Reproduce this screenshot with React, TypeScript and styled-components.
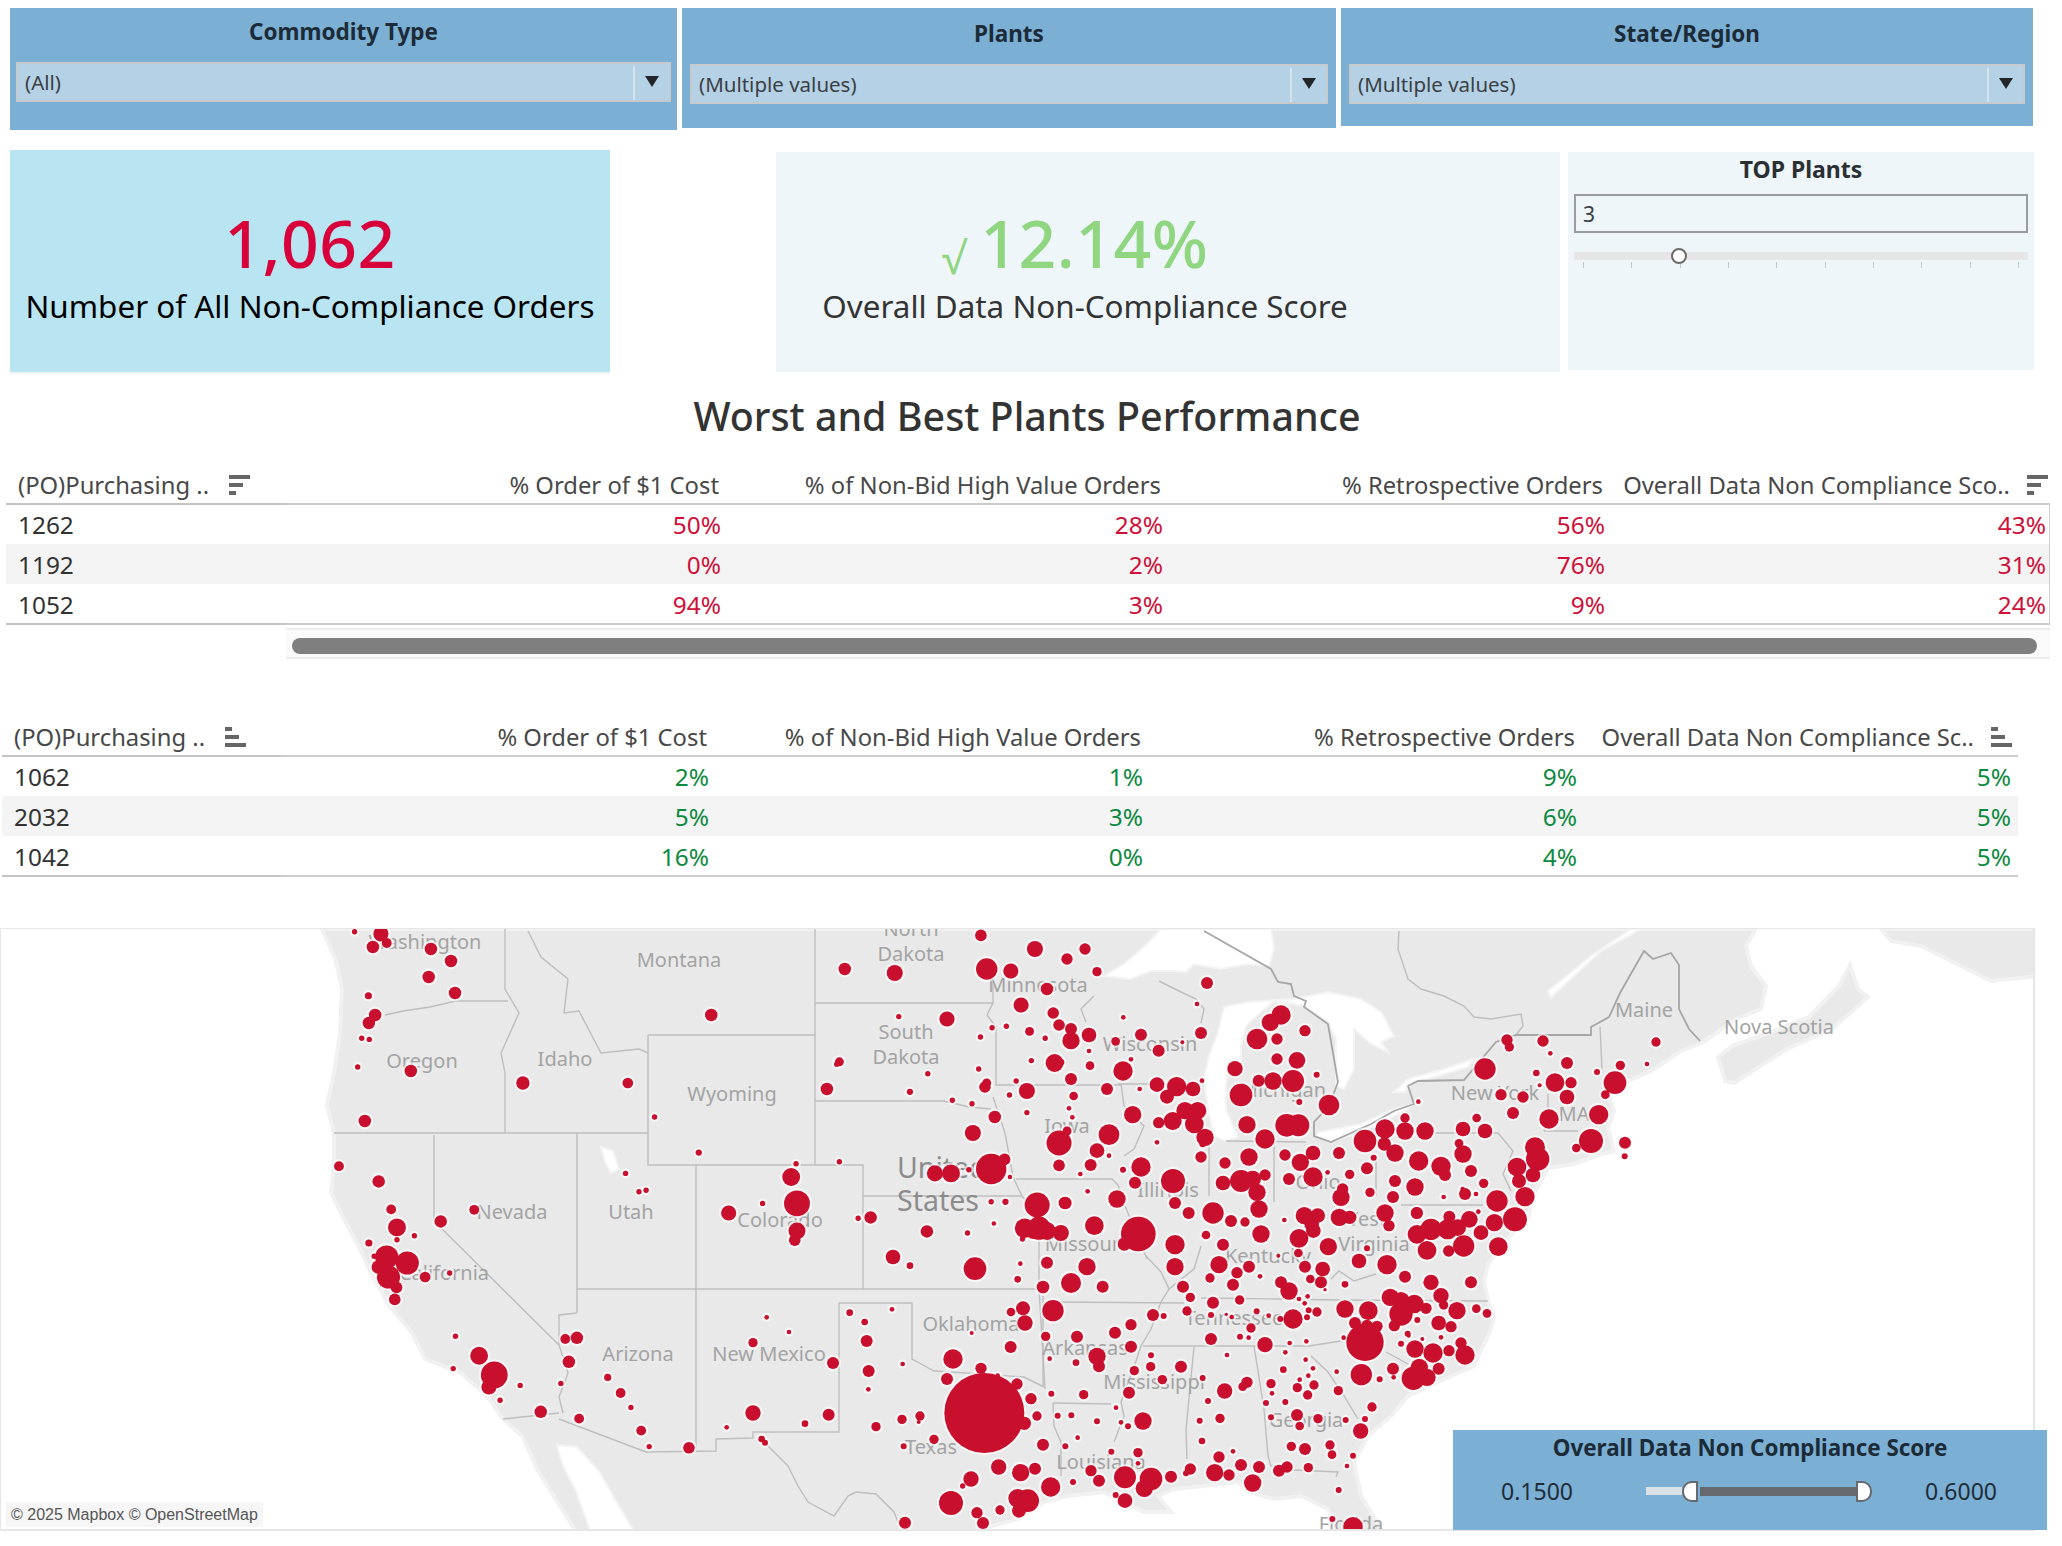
import styled, { createGlobalStyle } from "styled-components";

const FONT = `"Noto Sans", "Open Sans", sans-serif`;

const GlobalStyle = createGlobalStyle`
  html, body {
    margin: 0;
    background: #ffffff;
  }
  * {
    box-sizing: border-box;
  }
`;

const Page = styled.div`
  width: 2062px;
  height: 1546px;
  padding-top: 8px;
  font-family: ${FONT};
  overflow: hidden;
`;

// ---- filters ----
const FilterRow = styled.div`
  display: flex;
  align-items: flex-start;
  gap: 5px;
  height: 122px;
  padding-left: 10px;
`;

const FilterPanel = styled.div<{ $width: number; $height: number; $inset: number }>`
  width: ${(p) => p.$width}px;
  height: ${(p) => p.$height}px;
  padding: 0 ${(p) => p.$inset}px;
  background: #7bafd4;
`;

const FilterTitle = styled.div<{ $height: number; $top: number }>`
  height: ${(p) => p.$height}px;
  padding-top: ${(p) => p.$top}px;
  line-height: 32px;
  font-size: 22.5px;
  font-weight: 700;
  text-align: center;
  color: #1c2b38;
`;

const Select = styled.div`
  display: flex;
  height: 40px;
  background: #b5d1e6;
  border: 2px solid #c6cacc;
`;

const SelectValue = styled.div`
  flex: 1;
  padding-left: 7px;
  line-height: 37px;
  font-size: 20.5px;
  color: #3a3f44;
`;

const SelectArrow = styled.div`
  display: flex;
  align-items: center;
  justify-content: center;
  width: 36px;
  border-left: 2px solid #d7e3ec;
  margin: 2px 0 0;

  &::after {
    content: "";
    border-left: 7px solid transparent;
    border-right: 7px solid transparent;
    border-top: 11px solid #22262a;
    margin-bottom: 4px;
  }
`;

// ---- KPI cards ----
const KpiRow = styled.div`
  display: flex;
  align-items: flex-start;
  height: 224px;
  margin-top: 20px;
  padding-left: 10px;
`;

const KpiCard = styled.div<{ $shaded?: boolean }>`
  display: flex;
  flex-direction: column;
  align-items: center;
  width: ${(p) => (p.$shaded ? 600 : 784)}px;
  height: ${(p) => (p.$shaded ? 224 : 220)}px;
  margin: ${(p) => (p.$shaded ? "0 166px 0 0" : "2px 8px 0 0")};
  padding: ${(p) => (p.$shaded ? "50px 0 0" : "48px 166px 0 0")};
  background: ${(p) => (p.$shaded ? "#b9e4f2" : "#eef6fa")};
  border-bottom: ${(p) => (p.$shaded ? "2px solid #eff5f6" : "none")};
`;

const KpiValue = styled.div<{ $color: string; $shift?: number }>`
  display: flex;
  align-items: baseline;
  height: 84px;
  margin-right: ${(p) => p.$shift ?? 0}px;
  line-height: 84px;
  font-size: 66px;
  font-weight: 500;
  letter-spacing: 0.5px;
  color: ${(p) => p.$color};
`;

const KpiCheck = styled.span`
  font-size: 44px;
  margin-right: 14px;
  transform: translateY(6px);
`;

const KpiLabel = styled.div<{ $color: string }>`
  line-height: 44px;
  font-size: 31.4px;
  white-space: nowrap;
  color: ${(p) => p.$color};
`;

const ParamCard = styled.div`
  width: 466px;
  height: 218px;
  margin-top: 2px;
  padding: 0 6px;
  background: #eef6fa;
`;

const ParamTitle = styled.div`
  height: 42px;
  line-height: 34px;
  font-size: 23px;
  font-weight: 700;
  text-align: center;
  color: #2a2f33;
`;

const ParamInput = styled.div`
  height: 39px;
  padding-left: 7px;
  line-height: 37px;
  font-size: 21px;
  color: #3a3f44;
  border: 2px solid #9a9c9e;
`;

const ParamTrack = styled.div`
  position: relative;
  height: 8px;
  margin-top: 19px;
  background: #e6e6e6;
`;

const ParamThumb = styled.div`
  position: absolute;
  left: 97px;
  top: -4px;
  width: 16px;
  height: 16px;
  border-radius: 50%;
  background: #ffffff;
  border: 2px solid #6a6a6a;
`;

const TickRow = styled.div`
  display: flex;
  justify-content: space-between;
  margin-top: 2px;
  padding: 0 9px;
`;

const Tick = styled.i`
  width: 1px;
  height: 6px;
  background: #c8c8c8;
`;

// ---- tables ----
const SectionTitle = styled.h1`
  width: 2054px;
  height: 60px;
  margin: 12px 0 18px;
  line-height: 60px;
  font-size: 39.4px;
  font-weight: 500;
  text-align: center;
  color: #333333;
`;

const TableWrap = styled.div<{ $left: number; $top?: number }>`
  width: max-content;
  margin-left: ${(p) => p.$left}px;
  margin-top: ${(p) => p.$top ?? 0}px;
`;

// head and last rows are 1px taller so that their rule sits on the row boundary
const Row = styled.div<{ $columns: string; $head?: boolean; $zebra?: boolean; $edge?: boolean }>`
  display: grid;
  grid-template-columns: ${(p) => p.$columns};
  height: ${(p) => (p.$edge ? 41 : 40)}px;
  margin-bottom: ${(p) => (p.$edge ? -1 : 0)}px;
  line-height: 30px;
  font-size: ${(p) => (p.$head ? 23.8 : 24.4)}px;
  background: ${(p) => (p.$zebra ? "#f4f4f4" : "transparent")};
`;

const Cell = styled.div<{ $color?: string; $head?: boolean; $last?: boolean; $pad: number; $first?: boolean; $closed?: boolean }>`
  display: flex;
  justify-content: ${(p) => (p.$first ? "flex-start" : "flex-end")};
  align-items: center;
  padding: ${(p) => {
    const top = p.$head || p.$last ? 2 : 1;
    return p.$first ? `${top}px 0 0 ${p.$pad}px` : `${top}px ${p.$pad}px 0 0`;
  }};
  color: ${(p) => p.$color ?? (p.$head ? "#484848" : "#333333")};
  white-space: nowrap;
  border-bottom: ${(p) => (p.$head || p.$last ? `2px solid ${p.$first ? "#c4c4c4" : "#cccccc"}` : "none")};
  border-right: ${(p) => (p.$closed ? "1px solid #cfcfcf" : "none")};
`;

const SortMark = styled.svg<{ $gap: number; $end?: number }>`
  flex: none;
  margin-left: ${(p) => p.$gap}px;
  margin-right: ${(p) => p.$end ?? 0}px;
`;

const ScrollTrack = styled.div`
  width: 1764px;
  height: 31px;
  margin: 4px 0 0 286px;
  padding: 8px 13px 0 6px;
  background: #fafafa;
  border-top: 2px solid #eeeeee;
  border-bottom: 2px solid #eeeeee;
`;

const ScrollThumb = styled.div`
  height: 16px;
  border-radius: 8px;
  background: #7f7f7f;
`;

// ---- map ----
const MapFrame = styled.div`
  position: relative;
  width: 2035px;
  height: 603px;
  margin-top: 52px;
  border: 1px solid #e6e6e6;
  border-width: 1px 2px 2px 1px;
`;

const MapCanvas = styled.svg`
  display: block;
  width: 100%;
  height: 100%;
  background: #ffffff;
`;

const Attribution = styled.div`
  position: absolute;
  left: 5px;
  bottom: 2px;
  padding: 0 5px;
  height: 25px;
  line-height: 25px;
  font-family: "Liberation Sans", Arial, sans-serif;
  font-size: 16px;
  color: #555555;
  background: rgba(245, 245, 245, 0.85);
`;

const ScoreLegend = styled.div`
  position: absolute;
  right: -14px;
  bottom: -1px;
  width: 594px;
  height: 100px;
  background: #7bafd4;
`;

const LegendTitle = styled.div`
  height: 36px;
  line-height: 36px;
  font-size: 22.4px;
  font-weight: 700;
  text-align: center;
  color: #1c2b38;
`;

const LegendRow = styled.div`
  display: flex;
  align-items: center;
  justify-content: space-between;
  height: 50px;
  padding: 0 50px 0 48px;
  font-size: 23px;
  color: #1f2d38;
`;

const RangeSlider = styled.div`
  display: flex;
  align-items: center;
  width: 226px;
  margin-left: 20px;
`;

const RangeEdge = styled.div`
  width: 36px;
  height: 8px;
  background: #dbe3e8;
`;

const RangeFill = styled.div`
  flex: 1;
  height: 9px;
  margin: 0 0 0 2px;
  background: #666a6e;
`;

const RangeHandle = styled.div<{ $side: "left" | "right" }>`
  width: 16px;
  height: 21px;
  background: #ffffff;
  border: 2px solid #666a6e;
  border-radius: ${(p) => (p.$side === "left" ? "10px 0 0 10px" : "0 10px 10px 0")};
`;

// ---- table data ----
const WORST = [
  ["1262", "50%", "28%", "56%", "43%"],
  ["1192", "0%", "2%", "76%", "31%"],
  ["1052", "94%", "3%", "9%", "24%"],
];
const BEST = [
  ["1062", "2%", "1%", "9%", "5%"],
  ["2032", "5%", "3%", "6%", "5%"],
  ["1042", "16%", "0%", "4%", "5%"],
];
const HEADERS = ["% Order of $1 Cost", "% of Non-Bid High Value Orders", "% Retrospective Orders"];
const RED = "#cf1039";
const GREEN = "#0d8a40";

const SortIcon = ({ up, gap, end }: { up?: boolean; gap: number; end?: number }) => {
  const bars = up ? [7, 14, 21] : [21, 14, 7];
  return (
    <SortMark $gap={gap} $end={end} width="21" height="20" viewBox="0 0 21 20">
      {bars.map((w, i) => (
        <rect key={i} x="0" y={i * 8} width={w} height="4" fill="#666666" />
      ))}
    </SortMark>
  );
};

type TableProps = {
  rows: string[][];
  color: string;
  columns: string;
  firstPad: number;
  headPad: number;
  bodyPad: number;
  lastHeader: string;
  lastPad: number;
  up?: boolean;
  closed?: boolean;
};

const ScoreTable = ({ rows, color, columns, firstPad, headPad, bodyPad, lastHeader, lastPad, up, closed }: TableProps) => (
  <>
    <Row $columns={columns} $head $edge>
      <Cell $first $head $pad={firstPad}>
        (PO)Purchasing ..
        <SortIcon up={up} gap={20} />
      </Cell>
      {HEADERS.map((h) => (
        <Cell key={h} $head $pad={headPad}>
          {h}
        </Cell>
      ))}
      <Cell $head $pad={0}>
        {lastHeader}
        <SortIcon up={up} gap={17} end={lastPad} />
      </Cell>
    </Row>
    {rows.map((row, i) => (
      <Row key={row[0]} $columns={columns} $zebra={i === 1} $edge={i === 2}>
        <Cell $first $last={i === 2} $pad={firstPad}>
          {row[0]}
        </Cell>
        {row.slice(1).map((value, j) => (
          <Cell key={j} $color={color} $last={i === 2} $pad={j === 3 ? lastPad + 1 : bodyPad} $closed={closed && j === 3}>
            {value}
          </Cell>
        ))}
      </Row>
    ))}
  </>
);

// ---- map data ----
// land, water and borders are in page pixels, the viewBox below lines up with the page
const LAND = [
  "321,928 335,960 341,988 339,1032 333,1072 326,1104 333,1134 333,1164 330,1192 346,1224 357,1244 370,1272 388,1304 411,1332 424,1358 460,1372 487,1396 502,1418 522,1436 536,1468 576,1532 983,1532 990,1525 1017,1518 1043,1501 1067,1495 1103,1491 1143,1511 1170,1511 1157,1495 1173,1488 1203,1485 1237,1481 1247,1491 1273,1498 1300,1495 1327,1508 1337,1532 1383,1532 1360,1495 1353,1461 1367,1435 1390,1415 1407,1395 1437,1381 1473,1365 1490,1328 1493,1315 1487,1300 1483,1280 1487,1263 1507,1237 1527,1217 1533,1193 1547,1167 1573,1163 1600,1153 1613,1150 1607,1127 1613,1110 1607,1093 1627,1080 1650,1070 1680,1050 1701,1042 1735,1018 1760,1008 1765,985 1750,965 1745,945 1755,928",
  "1717,1056 1724,1080 1733,1082 1786,1048 1831,1028 1867,996 1857,988 1849,964 1838,985 1808,1016 1768,1032 1733,1044",
  "1880,928 2036,928 2036,975 1990,980 1950,960 1920,945 1890,940",
];

const WATER = [
  // gulf of california
  "556,1444 576,1446 598,1470 615,1500 634,1532 590,1532 575,1490 562,1465",
  // superior
  "1103,975 1123,963 1143,946 1160,928 1270,928 1273,948 1268,965 1247,963 1220,968 1193,963 1185,971 1173,970 1150,970 1130,978",
  // michigan and huron
  "1223,1006 1247,1001 1293,998 1327,991 1360,998 1380,1011 1393,1035 1380,1041 1387,1051 1370,1043 1353,1028 1353,1068 1343,1088 1335,1085 1335,1038 1327,1021 1303,1005 1273,1000 1260,1011 1245,1025 1240,1045 1240,1061 1227,1068 1225,1085 1225,1108 1237,1136 1225,1140 1213,1135 1207,1108 1203,1078 1208,1055 1217,1031",
  // erie
  "1318,1131 1360,1123 1393,1108 1413,1103 1407,1108 1377,1123 1347,1135 1330,1141 1315,1135",
  // ontario
  "1393,1091 1407,1078 1443,1068 1473,1058 1467,1066 1437,1075 1413,1081 1403,1091",
  // st lawrence
  "1550,996 1600,950 1640,928 1630,928 1590,955 1547,990",
  // salt lake
  "600,1146 612,1150 618,1168 610,1172 604,1160",
];

const BORDERS = [
  "384,1014 402,1010 429,1006 455,1000 507,1000",
  "504,928 504,988 518,1012 500,1052 504,1072 504,1132",
  "527,930 540,956 567,978 563,1012 578,1010 600,1052 638,1048 647,1052",
  "647,1034 647,1164 695,1164 862,1164 862,1288",
  "814,928 814,1164",
  "647,1034 814,1034",
  "814,1002 992,1002",
  "814,1100 943,1100 968,1106 990,1108",
  "992,980 992,1002 986,1014 995,1026 995,1084 1120,1084",
  "992,1096 1004,1132 1012,1176 1021,1195 1038,1216 1038,1287 1044,1388",
  "862,1195 1021,1195",
  "333,1132 647,1132",
  "576,1132 576,1312",
  "576,1288 1039,1288",
  "695,1164 695,1448",
  "433,1134 433,1220 558,1344",
  "576,1312 558,1314 558,1344 567,1372 558,1396 562,1412",
  "502,1418 558,1412",
  "558,1418 645,1451 715,1450 715,1438 752,1437 752,1431 838,1431 838,1302",
  "838,1302 911,1302 911,1358 920,1363 933,1370 950,1371 1023,1376 1043,1386",
  "1042,1295 1042,1385",
  "1052,1301 1183,1302",
  "763,1441 787,1465 797,1485 807,1501 833,1515 847,1495 855,1491 875,1493 893,1511 897,1521 904,1528",
  "1052,1402 1110,1403",
  "1052,1402 1053,1425 1060,1441 1060,1475",
  "1145,1255 1160,1271 1168,1288 1160,1301 1150,1328 1140,1345 1135,1360 1120,1401 1123,1415 1113,1441",
  "1168,1288 1193,1268 1200,1245",
  "1200,1297 1277,1298 1337,1299 1487,1300",
  "1142,1345 1290,1345 1308,1345 1340,1340",
  "1193,1346 1185,1428 1186,1458",
  "1253,1345 1263,1408 1267,1455 1270,1465 1293,1469 1337,1471 1335,1476",
  "1310,1355 1327,1371 1343,1395 1357,1418",
  "1093,995 1080,1008 1085,1021",
  "1117,1083 1203,1083",
  "1120,1083 1123,1105 1143,1125 1133,1148 1123,1155",
  "1015,1178 1111,1178 1117,1184 1122,1200 1146,1258",
  "1208,1141 1208,1195",
  "1273,1141 1273,1201",
  "1225,1140 1305,1141",
  "1375,1155 1375,1195",
  "1433,1132 1497,1132 1512,1150 1502,1173 1510,1190",
  "1400,1204 1482,1204",
  "1330,1278 1338,1270 1353,1280 1375,1273",
  "1385,1351 1407,1363",
  "1599,1026 1601,1068",
  "1543,1130 1577,1130",
  "1547,1093 1547,1110 1543,1130",
  "1158,980 1178,990 1195,998 1203,1008 1200,1022",
  "1398,930 1397,948 1407,978 1420,988 1443,995 1463,1005 1473,1016 1490,1018 1520,1013 1522,1025 1515,1034",
];

const NATIONAL = [
  "1203,930 1270,968 1277,981 1290,983 1293,995 1305,1000 1303,1006 1327,1023 1337,1081 1328,1105 1313,1121 1313,1135 1330,1141 1370,1123 1393,1110 1413,1103 1407,1085 1417,1080 1463,1079 1495,1041 1515,1034 1590,1034 1590,1026 1608,1016 1619,992 1643,950 1652,958 1670,952 1678,964 1678,1008 1688,1028 1699,1040",
];

const LABELS: [string, number, number][] = [
  ["Washington", 424, 940],
  ["Montana", 678, 958],
  ["North", 910, 927],
  ["Dakota", 910, 952],
  ["Minnesota", 1037, 983],
  ["Oregon", 421, 1059],
  ["Idaho", 564, 1057],
  ["Wyoming", 731, 1092],
  ["South", 905, 1030],
  ["Dakota", 905, 1055],
  ["Wisconsin", 1149, 1042],
  ["Michigan", 1282, 1088],
  ["New York", 1494, 1091],
  ["Maine", 1643, 1008],
  ["Nova Scotia", 1778, 1025],
  ["MA", 1573, 1112],
  ["Utah", 630, 1210],
  ["Nevada", 511, 1210],
  ["California", 443, 1271],
  ["Colorado", 779, 1218],
  ["Arizona", 637, 1352],
  ["New Mexico", 768, 1352],
  ["Oklahoma", 970, 1322],
  ["Texas", 930, 1445],
  ["Arkansas", 1084, 1346],
  ["Mississippi", 1153, 1380],
  ["Louisiana", 1100, 1460],
  ["Tennessee", 1233, 1316],
  ["Kentucky", 1267, 1254],
  ["Missouri", 1084, 1242],
  ["Illinois", 1167, 1188],
  ["Ohio", 1317, 1180],
  ["Iowa", 1066, 1124],
  ["Georgia", 1305, 1418],
  ["Florida", 1350, 1522],
  ["West", 1362, 1217],
  ["Virginia", 1373, 1242],
];

// dots were read region by region, each list is "x,y,r" in its own region grid
const DOT_REGIONS = [
  {
    ox: 0, oy: 920, sx: 2.24, sy: 2.5,
    dots: "792,27,6 851,32,17 864,55,11 833,65,14 963,70,14 1008,100,14 958,140,14 1017,180,14 823,187,8 838,235,14 824,255,14 808,293,6 825,296,6 799,365,6 918,375,14 1169,405,15 1404,405,12 815,500,14 1464,490,6 757,613,11 846,651,14 1563,579,7 1399,631,6 1429,677,6 1445,673,6 874,721,11 1060,722,11 985,751,14 887,766,20 926,787,6 887,797,6 824,805,8 864,840,26 836,838,6 910,855,26 845,865,15 868,890,26 886,916,13 950,890,12 1005,880,6 882,946,13 1018,1038,6 1264,1045,11 1290,1042,14 1071,1087,20 1272,1102,14 1013,1119,6 1105,1135,30 1093,1165,17 1163,1161,6 1118,1198,6 1254,1156,6 1359,1141,8 1388,1180,11 1411,1216,6 1209,1227,14 1295,1244,11 1434,1274,11 1452,1314,6 1541,1317,13",
  },
  {
    ox: 700, oy: 920, sx: 2.24, sy: 2.5,
    dots: "627,36,13 748,70,18 640,120,24 694,125,17 775,170,14 322,120,14 434,130,18 23,235,14 717,210,17 789,230,13 802,260,13 551,245,17 443,239,6 652,267,6 684,263,6 736,276,10 771,293,6 626,290,6 792,355,20 740,349,6 622,370,6 310,352,10 304,358,6 508,382,6 706,400,6 640,405,10 636,415,13 730,425,18 282,420,14 468,427,7 691,435,6 563,448,6 607,457,6 658,490,14 730,479,6 609,530,18 802,555,28 820,525,10 802,611,13 213,607,6 310,602,6 202,640,20 215,706,29 138,706,6 62,730,17 215,775,19 210,798,13 352,743,6 380,741,14 524,631,18 560,631,20 600,622,6 650,620,34 680,596,13 692,640,5 650,702,6 682,702,7 753,710,28 815,705,14 656,756,5 506,776,14 597,780,6 725,768,22 745,775,18 757,768,26 775,775,20 806,780,18 720,795,6",
  },
  {
    ox: 600, oy: 1228, sx: 3, sy: 3,
    dots: "876,84,22 927,110,10 1122,119,34 1258,104,7 1250,151,10 1338,101,18 1326,174,19 1230,249,13 1266,238,21 1356,245,32 1272,282,23 746,251,10 873,241,7 791,279,10 497,265,7 564,309,7 456,341,14 797,336,18 1112,312,6 1334,322,14 1229,354,18 696,402,18 905,405,7 803,426,18 1056,390,29 1140,418,17 1038,450,18 1190,440,7 1248,465,17 802,481,7 1290,509,17 1346,389,7 1351,494,9 1150,552,120 1270,583,20 1308,561,14 903,571,14 957,561,14 953,579,6 456,552,23 683,557,18 612,584,10 825,593,14 377,595,7 482,630,10 492,641,9 999,631,14 908,652,9 1326,647,18 1370,560,9 1193,714,23 1259,731,26 1302,719,18 1110,750,23 1085,771,8 1349,774,29 1250,808,28 1280,815,34 1254,845,21 1050,822,36 1197,843,14 1128,851,17 1146,882,18 912,881,18",
  },
  {
    ox: 1060, oy: 928, sx: 3, sy: 3,
    dots: "72,60,17 18,90,17 108,128,14 438,162,18 408,225,7 187,265,7 660,258,29 628,280,26 588,330,31 648,330,17 732,305,17 30,300,18 30,335,26 84,318,22 0,290,10 240,317,18 164,337,13 364,340,6 420,312,18 293,365,18 84,366,7 210,391,7 87,410,13 186,426,29 0,400,10 648,390,17 708,394,25 522,419,23 593,455,18 636,456,26 696,456,33 767,437,9 30,450,18 138,480,18 236,480,7 288,467,22 347,473,29 318,503,21 396,480,22 423,455,7 38,501,13 540,498,34 715,519,9 804,528,31 24,538,7 34,565,7 215,557,26 293,581,17 335,576,27 372,545,26 410,545,26 400,585,28 432,625,26 425,645,10 558,587,26 612,630,29 677,589,34 712,589,33 144,617,31 108,665,22 144,680,7 89,708,18 288,640,7 420,684,17 186,722,9 240,714,29 58,735,7 222,761,18 336,756,36 80,787,7 168,810,26 14,822,18 342,822,18 383,852,18 456,852,32 510,876,18 552,879,14 100,890,28 492,702,17 564,684,26 486,762,22 540,756,33 575,750,25 612,738,17 588,790,26 594,840,26 672,678,17 756,672,22 718,700,26 756,744,29 684,750,18 800,730,7 834,672,18 866,736,14 918,718,18 938,686,9 912,636,34 972,600,29 970,645,20 1002,672,26 1032,567,14 1032,606,26 1092,606,26 1073,696,29 1140,712,29 1152,738,18 1002,756,18 1062,774,26 996,804,18 927,790,14 845,780,17 840,805,26 972,852,26 984,890,17 670,873,7 730,860,26 770,860,22 752,885,22 835,865,26 866,865,20 1068,852,18 1148,804,7 1206,600,22 1272,606,22 1247,567,13 1194,643,13 1206,675,26 1230,726,18 1268,763,14 1072,518,7 1338,333,17 1345,354,14 1446,336,17 1468,373,7 1518,402,18 1272,420,32 1426,432,10 1482,461,28 1530,461,17 1436,469,6 1518,504,22 1320,497,17 1386,504,17 1356,552,18 1464,570,29 1422,655,30 1430,690,35 1368,714,28 1416,738,22 1374,756,21 1212,795,18 1205,780,7 1245,795,7",
  },
  {
    ox: 1060, oy: 1228, sx: 3, sy: 3,
    dots: "232,15,52 190,45,20 342,47,29 435,18,13 486,47,18 600,15,26 714,28,28 712,72,13 757,5,22 802,53,26 918,58,9 78,113,26 30,162,30 125,173,18 342,113,26 474,107,26 528,131,17 564,113,18 652,80,6 732,113,18 785,120,22 748,150,13 780,160,18 792,182,5 447,147,14 597,142,7 516,167,18 366,173,18 388,205,14 660,160,18 684,186,26 740,202,7 714,210,7 731,223,7 852,166,10 894,96,22 978,107,29 1032,143,18 1110,160,23 1230,160,18 1140,200,23 1148,228,14 1188,245,26 1246,239,13 1278,253,13 456,221,18 536,213,14 276,258,18 308,261,9 378,246,14 450,258,9 496,256,5 512,264,7 587,247,9 623,260,7 658,270,9 696,270,29 738,265,9 743,244,9 768,249,14 852,240,26 922,245,28 988,205,26 1020,215,26 1060,225,28 1095,238,17 1020,255,35 1000,290,17 882,282,18 948,292,17 918,290,18 912,340,56 848,326,7 1069,273,9 1133,282,22 1170,293,17 1040,314,9 1043,320,6 1084,330,6 1140,325,7 1020,344,9 1062,360,26 1116,372,29 1164,365,17 1200,342,17 1212,378,29 570,297,14 537,323,9 563,326,7 450,330,18 612,347,23 686,342,7 736,337,7 673,370,7 210,287,17 162,311,18 48,323,18 210,353,18 108,382,26 114,412,18 45,401,10 270,379,9 269,413,14 360,413,18 498,378,7 734,392,7 756,418,7 667,422,10 220,425,14 425,447,9 304,452,14 204,491,18 68,497,14 491,486,23 558,460,17 545,473,13 630,464,14 633,493,7 716,452,7 742,440,7 759,468,14 709,476,14 740,498,14 832,485,14 827,428,7 901,437,32 956,451,9 998,445,7 996,419,18 1133,419,18 1075,415,26 1057,448,35 1098,445,26 441,516,9 615,522,9 673,519,9 933,534,14 165,536,7 31,559,9 108,577,9 180,580,7 201,592,9 246,576,26 416,575,9 477,568,14 630,565,9 708,558,18 771,569,14 716,591,13 854,573,9 912,570,9 899,606,23 50,626,7 423,636,10 13,652,9 151,668,9 231,671,14 516,667,7 691,652,14 732,660,18 807,648,14 813,677,13 876,680,9 474,684,17 90,725,17 231,703,7 388,720,17 375,733,9 461,731,26 504,738,17 540,708,18 594,714,18 654,725,18 678,714,17 742,716,14 858,711,7 114,755,18 36,759,9 192,745,33 270,750,34 250,778,26 330,743,18 575,762,26 833,783,9 164,798,9 192,815,22 814,870,9 876,893,29",
  },
  {
    ox: 1400, oy: 1050, sx: 3, sy: 3,
    dots: "47,486,18 145,497,18 205,505,25 90,535,32 48,550,28 78,598,28 143,600,17 140,535,30 188,585,32 170,530,25 240,545,22 280,515,26 342,505,36 288,450,32 372,437,29 292,587,28 232,482,7 570,270,36 526,291,13 593,191,29 588,63,9 642,95,34 613,131,13 658,43,14 738,39,7 672,275,18 671,316,9 765,-27,14",
  },
];

const SPOTS = DOT_REGIONS.flatMap((region) =>
  region.dots.split(" ").map((d) => {
    const [x, y, r] = d.split(",").map(Number);
    return { cx: region.ox + x / region.sx, cy: region.oy + y / region.sy, r: r / region.sx };
  })
);

const UsMap = () => (
  <MapCanvas viewBox="0 928 2032 600" preserveAspectRatio="none">
    {LAND.map((points) => (
      <polygon key={points} points={points} fill="#e9e9e9" stroke="#f1f1f1" strokeWidth="4" />
    ))}
    {WATER.map((points) => (
      <polygon key={points} points={points} fill="#ffffff" stroke="#f4f4f4" strokeWidth="2" />
    ))}
    {BORDERS.map((points) => (
      <polyline key={points} points={points} fill="none" stroke="#bebebe" strokeWidth="1.4" />
    ))}
    {NATIONAL.map((points) => (
      <polyline key={points} points={points} fill="none" stroke="#a6a6a6" strokeWidth="1.8" />
    ))}
    {LABELS.map(([name, x, y]) => (
      <text
        key={`${name}${y}`}
        x={x}
        y={y}
        textAnchor="middle"
        dominantBaseline="central"
        fontFamily={FONT}
        fontSize="20"
        fill="#a3a3a3"
      >
        {name}
      </text>
    ))}
    <text x="896" y="1166" dominantBaseline="central" fontFamily={FONT} fontSize="28.5" fill="#8c8c8c">
      United
    </text>
    <text x="896" y="1199" dominantBaseline="central" fontFamily={FONT} fontSize="28.5" fill="#8c8c8c">
      States
    </text>
    <g fill="#ffffff" fillOpacity="0.6">
      {SPOTS.map((s, i) => (
        <circle key={i} cx={s.cx} cy={s.cy} r={s.r + 2.2} />
      ))}
    </g>
    <g fill="#c8102e">
      {SPOTS.map((s, i) => (
        <circle key={i} cx={s.cx} cy={s.cy} r={s.r} />
      ))}
    </g>
  </MapCanvas>
);

const FILTERS = [
  { title: "Commodity Type", value: "(All)", width: 667, height: 122, titleHeight: 54, top: 8, inset: 6 },
  { title: "Plants", value: "(Multiple values)", width: 654, height: 120, titleHeight: 56, top: 10, inset: 8 },
  { title: "State/Region", value: "(Multiple values)", width: 692, height: 118, titleHeight: 56, top: 10, inset: 8 },
];

const App = () => (
  <Page>
    <GlobalStyle />
    <FilterRow>
      {FILTERS.map((f) => (
        <FilterPanel key={f.title} $width={f.width} $height={f.height} $inset={f.inset}>
          <FilterTitle $height={f.titleHeight} $top={f.top}>
            {f.title}
          </FilterTitle>
          <Select>
            <SelectValue>{f.value}</SelectValue>
            <SelectArrow />
          </Select>
        </FilterPanel>
      ))}
    </FilterRow>

    <KpiRow>
      <KpiCard $shaded>
        <KpiValue $color="#d7003a">1,062</KpiValue>
        <KpiLabel $color="#000000">Number of All Non-Compliance Orders</KpiLabel>
      </KpiCard>
      <KpiCard>
        <KpiValue $color="#90d580" $shift={20}>
          <KpiCheck>√</KpiCheck>12.14%
        </KpiValue>
        <KpiLabel $color="#333333">Overall Data Non-Compliance Score</KpiLabel>
      </KpiCard>
      <ParamCard>
        <ParamTitle>TOP Plants</ParamTitle>
        <ParamInput>3</ParamInput>
        <ParamTrack>
          <ParamThumb />
        </ParamTrack>
        <TickRow>
          {Array.from({ length: 10 }, (_, i) => (
            <Tick key={i} />
          ))}
        </TickRow>
      </ParamCard>
    </KpiRow>

    <SectionTitle>Worst and Best Plants Performance</SectionTitle>

    <TableWrap $left={6}>
      <ScoreTable
        rows={WORST}
        color={RED}
        columns="280px 435px 442px 442px 445px"
        firstPad={12}
        headPad={2}
        bodyPad={0}
        lastHeader="Overall Data Non Compliance Sco.."
        lastPad={2}
        closed
      />
    </TableWrap>
    <ScrollTrack>
      <ScrollThumb />
    </ScrollTrack>

    <TableWrap $left={2} $top={57}>
      <ScoreTable
        rows={BEST}
        color={GREEN}
        columns="279px 430px 434px 434px 439px"
        firstPad={12}
        headPad={4}
        bodyPad={2}
        lastHeader="Overall Data Non Compliance Sc.."
        lastPad={6}
        up
      />
    </TableWrap>

    <MapFrame>
      <UsMap />
      <Attribution>© 2025 Mapbox © OpenStreetMap</Attribution>
      <ScoreLegend>
        <LegendTitle>Overall Data Non Compliance Score</LegendTitle>
        <LegendRow>
          <span>0.1500</span>
          <RangeSlider>
            <RangeEdge />
            <RangeHandle $side="left" />
            <RangeFill />
            <RangeHandle $side="right" />
          </RangeSlider>
          <span>0.6000</span>
        </LegendRow>
      </ScoreLegend>
    </MapFrame>
  </Page>
);

export default App;
